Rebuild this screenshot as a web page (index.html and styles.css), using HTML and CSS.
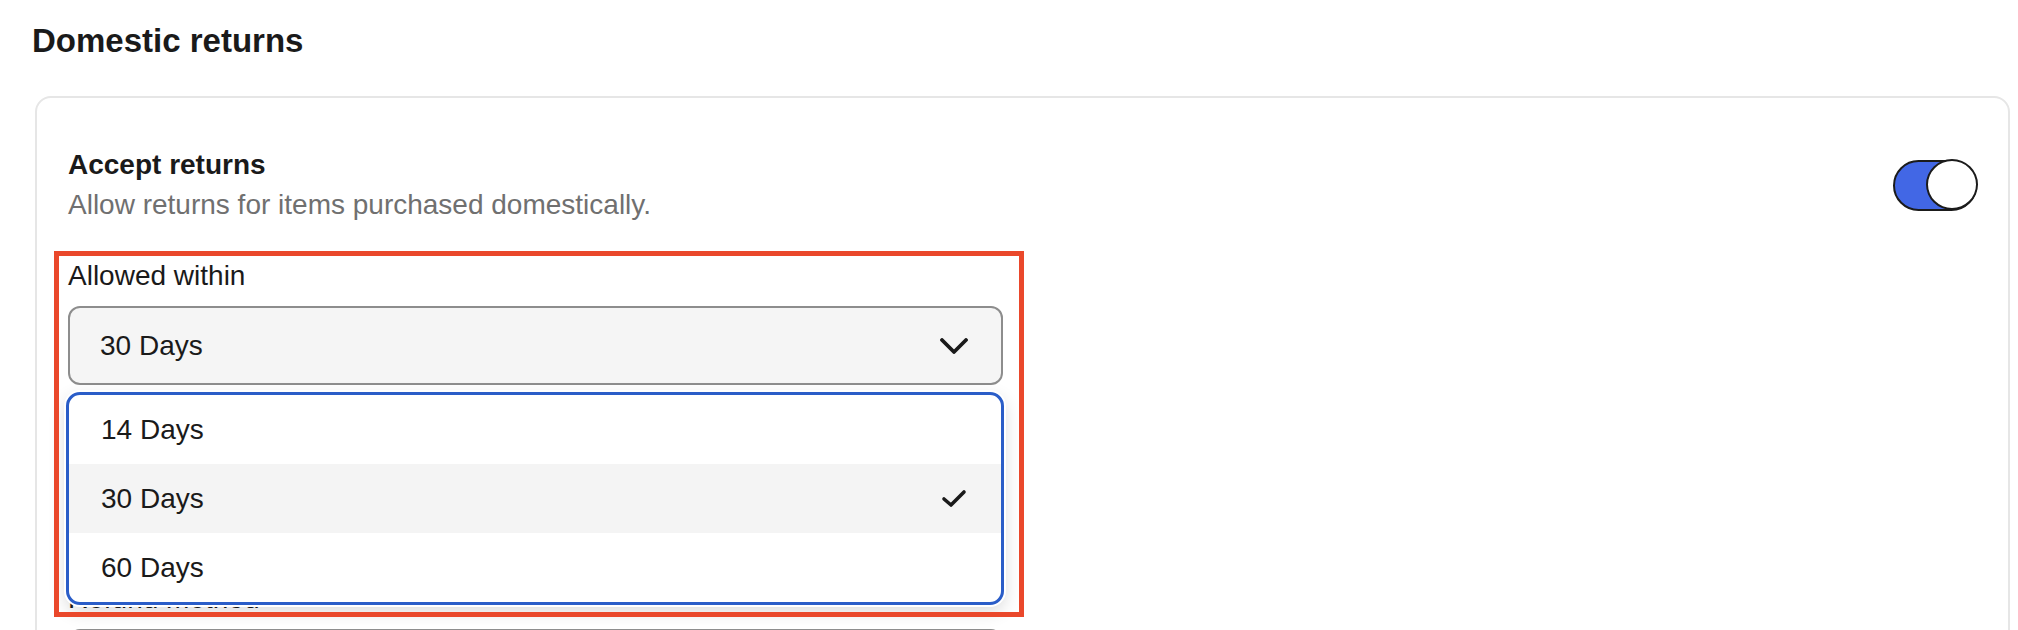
FILE: index.html
```html
<!DOCTYPE html>
<html lang="en">
    <head>
        <title>Domestic returns</title>
        <meta charset="UTF-8">

        <link rel="stylesheet" href="styles.css">
    </head>

    <body>
        <div id="page">
            <h2 class="page-title">Domestic returns</h2>

            <section class="card">
                <div class="card-head">
                    <div>
                        <h3 class="card-title">Accept returns</h3>
                        <p class="card-sub">Allow returns for items purchased domestically.</p>
                    </div>
                    <span class="toggle"><span class="knob"></span></span>
                </div>

                <div class="field">
                    <label class="field-label">Allowed within</label>
                    <div class="select-wrap">
                        <div class="select">
                            <span>30 Days</span>
                            <svg class="chevron" width="28" height="16" viewBox="0 0 28 16">
                                <path d="M2 2 L14 14 L26 2" fill="none" stroke="#1a1a1a" stroke-width="3.8" stroke-linecap="round" stroke-linejoin="round"/>
                            </svg>
                        </div>

                        <!-- open dropdown -->
                        <ul class="menu">
                            <li>14 Days</li>
                            <li class="selected">
                                <span>30 Days</span>
                                <svg width="26" height="20" viewBox="0 0 26 20">
                                    <path d="M3 10 L10 16 L23 3" fill="none" stroke="#1a1a1a" stroke-width="3.6" stroke-linecap="round" stroke-linejoin="round"/>
                                </svg>
                            </li>
                            <li>60 Days</li>
                        </ul>
                    </div>
                </div>

                <div class="field refund">
                    <label class="field-label">Refund method</label>
                    <div class="select"></div>
                </div>

                <!-- annotation box -->
                <div class="highlight"></div>
            </section>
        </div>
    </body>
</html>
```

FILE: styles.css
```css
body{
    margin: 0;
    font-family: "Liberation Sans", Arial, sans-serif;
    color: #1a1a1a;
    background-color: white;
    overflow: hidden;
}

#page{
    padding: 22px 8px 0 35px;
}

.page-title{
    margin: 0 0 36px -3px;
    font-size: 33px;
    line-height: 38px;
    font-weight: 700;
}

.card{
    position: relative;
    border: 2px solid #e6e6e6;
    border-radius: 16px;
    padding: 50px 31px 0 31px;
    height: 600px;
}

.card-head{
    display: flex;
    justify-content: space-between;
    align-items: center;
}

.card-title{
    margin: 0;
    font-size: 28px;
    line-height: 34px;
    font-weight: 700;
}

.card-sub{
    margin: 6px 0 0 0;
    font-size: 28px;
    line-height: 34px;
    color: #707070;
}

.toggle{
    display: flex;
    justify-content: flex-end;
    width: 84px;
    height: 51px;
    box-sizing: border-box;
    border: 2.5px solid #1b1b1b;
    border-radius: 26px;
    background-color: #4267e5;
}

.knob{
    width: 52px;
    height: 51px;
    margin: -2.5px -2.5px 0 0;
    box-sizing: border-box;
    border: 2.5px solid #1b1b1b;
    border-radius: 50%;
    background-color: white;
}

.field{
    width: 935px;
    margin-top: 37px;
}

.field.refund{
    margin-top: 197px;
}

.field-label{
    display: block;
    margin-bottom: 13px;
    font-size: 28px;
    line-height: 34px;
}

.select-wrap{
    position: relative;
}

.select{
    display: flex;
    justify-content: space-between;
    align-items: center;
    height: 79px;
    box-sizing: border-box;
    padding: 0 33px 0 30px;
    border: 2px solid #8d8d8d;
    border-radius: 12px;
    background-color: #f5f5f5;
    font-size: 28px;
}

.menu{
    position: absolute;
    top: calc(100% + 7px);
    left: -2px;
    width: 938px;
    box-sizing: border-box;
    margin: 0;
    padding: 0;
    list-style: none;
    border: 3px solid #2a5dc8;
    border-radius: 14px;
    background-color: white;
    box-shadow: 0 0 0 2px white, 0 6px 18px rgba(0, 0, 0, 0.16);
    overflow: hidden;
    z-index: 2;
}

.menu li{
    display: flex;
    justify-content: space-between;
    align-items: center;
    height: 69px;
    padding: 0 34px 0 32px;
    font-size: 28px;
}

.menu li.selected{
    background-color: #f4f4f4;
}

.highlight{
    position: absolute;
    left: 17px;
    top: 153px;
    width: 970px;
    height: 366px;
    box-sizing: border-box;
    border: 5px solid #ea482b;
    z-index: 3;
}
```
